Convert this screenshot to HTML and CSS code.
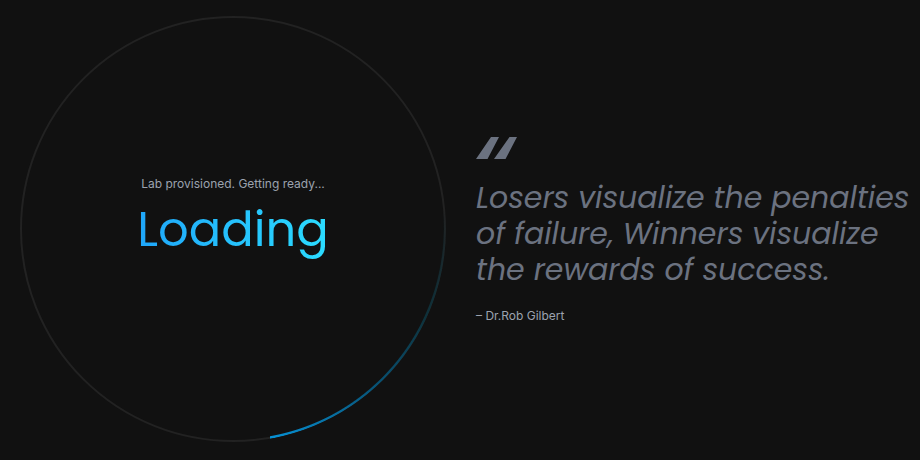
FILE: index.html
```html
<!DOCTYPE html>
<html lang="en">
<head>
<meta charset="utf-8">
<meta name="viewport" content="width=device-width, initial-scale=1">
<title>Loading</title>
<link rel="stylesheet" href="styles.css">
</head>
<body>
<main class="screen">
  <section class="loader" role="status">
    <p class="status">Lab provisioned. Getting ready...</p>
    <h1 class="title">Loading</h1>
  </section>
  <figure class="quote">
    <svg class="quote-mark" viewBox="0 0 42 22" aria-hidden="true">
      <path d="M15 0H23L11.500 22H0ZM33.500 0H41L29.500 22H18Z"/>
    </svg>
    <blockquote class="quote-text">Losers visualize the penalties<br>of failure, Winners visualize<br>the rewards of success.</blockquote>
    <figcaption class="author">– Dr.Rob Gilbert</figcaption>
  </figure>
</main>
</body>
</html>
```

FILE: styles.css
```css
* {
  box-sizing: border-box;
}

body {
  margin: 0;
  background: #111;
  font-family: Inter, sans-serif;
}

.screen {
  display: flex;
  align-items: center;
  gap: 30px;
  padding: 16px 0 16px 20px;
}

.loader {
  position: relative;
  flex: none;
  display: flex;
  flex-direction: column;
  align-items: center;
  justify-content: center;
  width: calc(50% - 24px);
  aspect-ratio: 1;
  border: 2px solid #222;
  border-radius: 50%;
}

.loader::before {
  content: "";
  position: absolute;
  inset: -2px;
  border-radius: 50%;
  background: conic-gradient(transparent 85deg, #0e323c 115deg, #075478 138deg, #0692d6 170deg, transparent 170deg);
  mask: radial-gradient(closest-side, transparent calc(100% - 3px), #000 calc(100% - 2px));
}

.status {
  margin: 0;
  color: #9ca3af;
  font-size: 12px;
  line-height: 16px;
}

.title {
  margin: 2px 0 0;
  padding-bottom: 16px;
  background: linear-gradient(90deg, #1fa6fa, #2bdcff);
  background-clip: text;
  color: transparent;
  font-family: Poppins, Inter, sans-serif;
  font-size: 48px;
  font-weight: 400;
  line-height: 72px;
}

.quote {
  flex: 1;
  min-width: 0;
  margin: 0;
  padding-top: 3px;
}

.quote-mark {
  display: block;
  width: 42px;
  height: 22px;
  fill: #6b7280;
}

.quote-text {
  margin: 21px 0 20px;
  color: #6b7280;
  font-family: Poppins, "Open Sans", sans-serif;
  font-size: 30px;
  font-style: italic;
  font-weight: 400;
  line-height: 36px;
  white-space: nowrap;
}

.author {
  color: #9ca3af;
  font-size: 12px;
  line-height: 16px;
}
```
